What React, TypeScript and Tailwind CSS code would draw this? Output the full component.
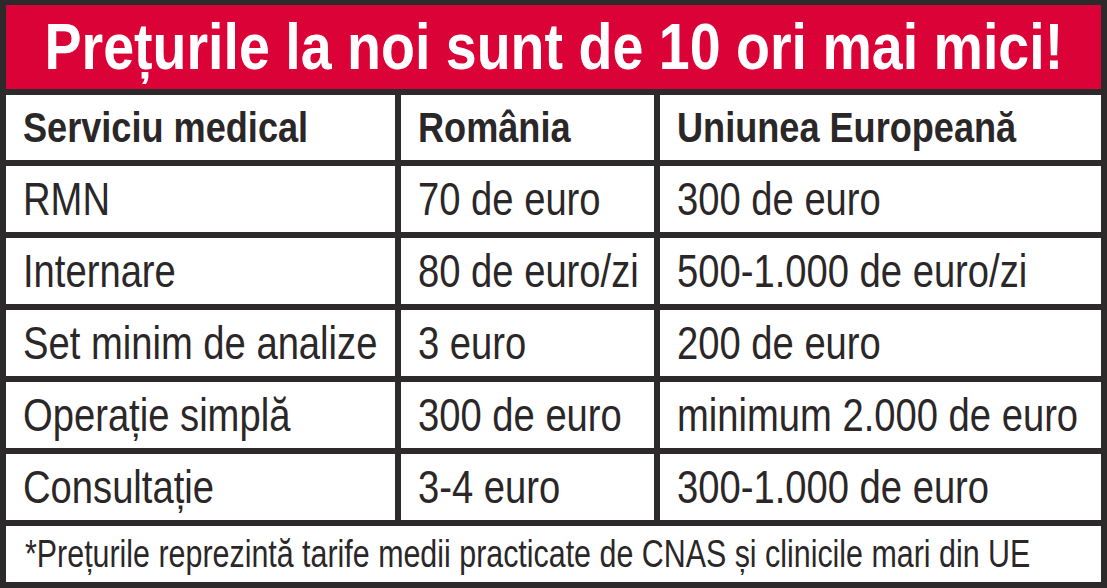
const rows = [
  ["RMN", "70 de euro", "300 de euro"],
  ["Internare", "80 de euro/zi", "500-1.000 de euro/zi"],
  ["Set minim de analize", "3 euro", "200 de euro"],
  ["Operație simplă", "300 de euro", "minimum 2.000 de euro"],
  ["Consultație", "3-4 euro", "300-1.000 de euro"],
];

// narrow grotesque is not installed, so Liberation Sans gets squeezed horizontally
const font = "font-['Liberation_Sans',Arial,sans-serif]";

const Cell = ({ children, bold }: { children: string; bold?: boolean }) => (
  <div className="bg-white flex items-center px-[17px] overflow-hidden whitespace-nowrap text-[#2b2728]">
    {bold ? (
      <span className="inline-block origin-left scale-x-[0.86] font-bold text-[42px] leading-none">
        {children}
      </span>
    ) : (
      <span className="inline-block origin-left scale-x-[0.83] text-[46px] leading-none">
        {children}
      </span>
    )}
  </div>
);

export default function App() {
  return (
    <div
      className={`w-[1107px] h-[588px] bg-[#2d2a2b] px-[6px] pt-[5px] pb-[6px] grid grid-cols-[389px_253px_441px] grid-rows-[84px_65px_66px_66px_66px_66px_66px_56px] gap-[6px] ${font}`}
    >
      <div className="col-span-3 bg-[#da0237] flex items-center justify-center overflow-hidden whitespace-nowrap">
        <h1 className="inline-block origin-center scale-x-[0.868] text-white font-bold text-[64px] leading-none">
          Prețurile la noi sunt de 10 ori mai mici!
        </h1>
      </div>
      <Cell bold>Serviciu medical</Cell>
      <Cell bold>România</Cell>
      <Cell bold>Uniunea Europeană</Cell>
      {rows.map((r) => (
        <>
          <Cell key={r[0] + "a"}>{r[0]}</Cell>
          <Cell key={r[0] + "b"}>{r[1]}</Cell>
          <Cell key={r[0] + "c"}>{r[2]}</Cell>
        </>
      ))}
      <div className="col-span-3 bg-white flex items-center px-[19px] overflow-hidden whitespace-nowrap text-[#2b2728]">
        <span className="inline-block origin-left scale-x-[0.8] text-[38px] leading-none">
          *Prețurile reprezintă tarife medii practicate de CNAS și clinicile mari din UE
        </span>
      </div>
    </div>
  );
}
